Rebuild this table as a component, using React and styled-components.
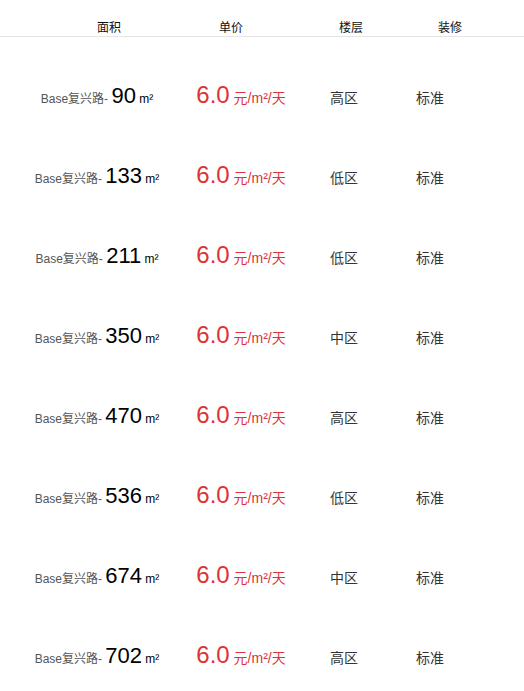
import React from 'react';
import styled, { createGlobalStyle } from 'styled-components';

const GlobalStyle = createGlobalStyle`
  body {
    margin: 0;
    background: #fff;
    font-family: "Liberation Sans", Arial, "Noto Sans CJK SC", sans-serif;
  }
`;

const rows = [
  { area: 90, floor: '高区' },
  { area: 133, floor: '低区' },
  { area: 211, floor: '低区' },
  { area: 350, floor: '中区' },
  { area: 470, floor: '高区' },
  { area: 536, floor: '低区' },
  { area: 674, floor: '中区' },
  { area: 702, floor: '高区' },
];

const App = () => {
  return (
    <Page>
      <GlobalStyle />
      <Header>
        <HeadCell>面积</HeadCell>
        <HeadCell>单价</HeadCell>
        <HeadCell>楼层</HeadCell>
        <HeadCell>装修</HeadCell>
      </Header>
      <List>
        {rows.map((r) => (
          <Row key={r.area}>
            <Cell>
              <Addr>Base复兴路- </Addr>
              <Num>{r.area}</Num>
              <Unit> m²</Unit>
            </Cell>
            <Cell>
              <Price>
                6.0<PriceUnit> 元/m²/天</PriceUnit>
              </Price>
            </Cell>
            <Cell>
              <Plain>{r.floor}</Plain>
            </Cell>
            <Cell>
              <Plain>标准</Plain>
            </Cell>
          </Row>
        ))}
      </List>
    </Page>
  );
};

export default App;

const Page = styled.div`
  width: 524px;
  height: 691px;
  overflow: hidden;
`;

const Header = styled.div`
  display: grid;
  grid-template-columns: 122px 122px 118px 80px;
  padding: 20px 0 0 48px;
  height: 16px;
  border-bottom: 1px solid #e5e5e5;
`;

const HeadCell = styled.div`
  text-align: center;
  font-size: 12px;
  line-height: 16px;
  color: #111;
`;

const List = styled.div`
  padding-top: 20px;
`;

const Row = styled.div`
  display: grid;
  grid-template-columns: 194px 94px 112px 60px;
  align-items: baseline;
  height: 80px;
  padding-top: 26px;
  box-sizing: border-box;
`;

const Cell = styled.div`
  text-align: center;
  white-space: nowrap;
  line-height: 24px;
`;

const Addr = styled.span`
  font-size: 12px;
  color: #555;
`;

const Num = styled.span`
  font-size: 22px;
  color: #000;
`;

const Unit = styled.span`
  font-size: 12px;
  color: #000;
`;

const Price = styled.span`
  font-size: 24px;
  color: #dd3238;
`;

const PriceUnit = styled.span`
  font-size: 14px;
`;

const Plain = styled.span`
  font-size: 14px;
  color: #333;
`;
